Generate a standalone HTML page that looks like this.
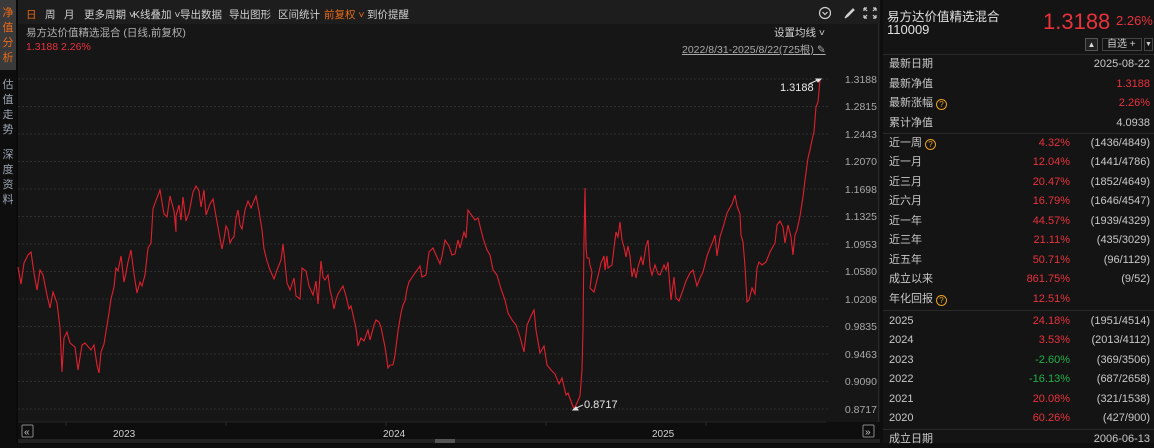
<!DOCTYPE html>
<html><head><meta charset="utf-8"><style>
*{margin:0;padding:0;box-sizing:border-box}
body{width:1154px;height:443px;background:#0e0e0e;font-family:"Liberation Sans","Noto Sans CJK SC",sans-serif;color:#c8c8c8;position:relative;overflow:hidden;font-size:11px}
.a{position:absolute;white-space:nowrap}
.side{position:absolute;left:0;width:16px;font-size:11px;line-height:15px;text-align:center;color:#9aa3b0}
.red{color:#e8323c}.grn{color:#22b04a}.org{color:#e86a1a}
.tb{position:absolute;top:7px;font-size:10.5px;color:#d0d0d0;white-space:nowrap}
.rp{position:absolute;left:883px;top:0;width:271px;height:443px;background:#141414}
.row{position:absolute;left:6px;right:4px;height:18px;font-size:11px;line-height:18px}
.row .l{position:absolute;left:0;color:#c8c8c8}
.row .m{position:absolute;right:80px;text-align:right}
.row .r{position:absolute;right:0;color:#c8c8c8}
.q{display:inline-block;width:11px;height:11px;border:1px solid #e8a020;border-radius:50%;color:#e8a020;font-size:8px;line-height:9px;text-align:center;vertical-align:-1px;margin-left:3px}
.sep{position:absolute;left:0;right:0;height:1px;background:#2a2a2a}
</style></head><body>
<div class="a" style="left:0;top:0;width:16px;height:70px;background:#3a3a3a"></div>
<div class="side" style="top:6px;color:#e86a1a;line-height:15px">净<br>值<br>分<br>析</div>
<div class="side" style="top:78px">估<br>值<br>走<br>势</div>
<div class="side" style="top:148px">深<br>度<br>资<br>料</div>
<div class="a" style="left:16px;top:0;width:2px;height:443px;background:#0a0a0a"></div>
<div class="a" style="left:18px;top:0;width:862px;height:24px;background:#1d1d1d"></div>
<div class="tb" style="left:26px;color:#e86a1a">日</div>
<div class="tb" style="left:45px">周</div>
<div class="tb" style="left:64px">月</div>
<div class="tb" style="left:84px">更多周期 ˅</div>
<div class="tb" style="left:133px">K线叠加 ˅</div>
<div class="tb" style="left:180px">导出数据</div>
<div class="tb" style="left:229px">导出图形</div>
<div class="tb" style="left:278px">区间统计</div>
<div class="tb" style="left:324px;color:#e86a1a">前复权 ˅</div>
<div class="tb" style="left:367px">到价提醒</div>
<svg class="a" style="left:818px;top:6px" width="60" height="14" viewBox="0 0 60 14" fill="none" stroke="#cfcfcf" stroke-width="1.2">
<circle cx="7" cy="7" r="5.5"/><path d="M4.5 6l2.5 2.5 2.5-2.5"/>
<path d="M27 12l2-3 6-6 1 1-6 6z" fill="#cfcfcf"/>
<path d="M46 2h3M46 2v3M58 2h-3M58 2v3M46 12h3M46 12v-3M58 12h-3M58 12v-3M46 2l3 3M58 2l-3 3M46 12l3-3M58 12l-3-3"/>
</svg>
<div class="a" style="left:18px;top:24px;width:862px;height:398px;background:#161616"></div>
<div class="a" style="left:26px;top:25px;color:#b0b0b0;font-size:10.5px">易方达价值精选混合 (日线,前复权)</div>
<div class="a red" style="left:26px;top:41px;font-size:10.5px">1.3188 2.26%</div>
<div class="a" style="left:774px;top:25px;color:#d0d0d0;font-size:10.5px">设置均线 ˅</div>
<div class="a" style="left:682px;top:42px;color:#aaa;text-decoration:underline;font-size:10.5px">2022/8/31-2025/8/22(725根) ✎</div>
<div class="a" style="left:878px;top:24px;width:1px;height:398px;background:#2a2a2a"></div>
<svg class="a" style="left:0;top:0" width="880" height="443">
<g stroke="#2e2e2e" stroke-dasharray="2,2" stroke-width="1">
<line x1="18" x2="828" y1="79" y2="79"/><line x1="18" x2="828" y1="106.5" y2="106.5"/><line x1="18" x2="828" y1="134" y2="134"/><line x1="18" x2="828" y1="161.5" y2="161.5"/><line x1="18" x2="828" y1="189" y2="189"/><line x1="18" x2="828" y1="216.5" y2="216.5"/><line x1="18" x2="828" y1="244" y2="244"/><line x1="18" x2="828" y1="271.5" y2="271.5"/><line x1="18" x2="828" y1="299" y2="299"/><line x1="18" x2="828" y1="326.5" y2="326.5"/><line x1="18" x2="828" y1="354" y2="354"/><line x1="18" x2="828" y1="381.5" y2="381.5"/><line x1="18" x2="828" y1="409" y2="409"/>
</g>
<polyline fill="none" stroke="#e0202e" stroke-width="1.1" points="18,267 21,284 24,263 28,255 31,252 34,273 37,290 40,270 43,275 47,295 50,308 53,292 57,303 60,328 62,372 64,338 67,332 70,343 75,347 78,370 82,345 85,343 91,350 94,345 97,365 99,373 101,352 104,344 109,313 111,299 114,287 116,268 118,271 121,256 124,282 126,273 128,262 131,250 134,274 137,293 140,282 142,286 145,275 147,257 148,248 151,243 153,209 155,203 160,190 164,214 167,217 170,196 174,211 176,232 176,216 179,205 181,220 183,197 186,221 189,213 193,192 196,186 199,191 201,207 204,190 206,215 210,204 213,199 219,233 222,249 224,239 226,226 228,230 230,243 232,239 234,237 236,218 238,210 240,225 242,229 245,210 248,201 251,208 256,196 259,211 262,230 264,249 267,261 270,270 274,279 277,270 281,260 283,244 284,253 287,283 290,290 294,278 296,296 300,299 302,268 306,271 309,286 313,295 316,281 318,304 321,261 323,277 325,280 328,275 330,290 332,298 334,309 336,300 338,294 343,286 346,296 349,309 351,306 356,328 358,346 361,338 364,341 368,330 370,340 374,325 376,320 379,322 381,327 385,347 388,368 390,365 393,365 395,355 398,331 401,313 403,305 405,301 407,289 409,282 415,273 420,266 422,277 426,275 429,252 433,248 436,255 440,264 442,256 445,240 449,246 452,255 455,254 458,240 460,248 464,232 466,238 468,210 470,213 475,220 478,218 483,238 487,250 490,255 493,270 497,275 501,289 505,300 508,313 512,320 516,325 520,337 524,352 527,325 531,316 534,310 536,330 540,353 544,346 547,365 551,370 555,374 559,384 562,378 566,395 568,393 572,404 574,409 577,403 580,396 582,370 583,330 584,240 585,188 586,247 587,258 589,258 590,265 592,272 590,288 594,292 598,276 601,263 604,256 605,270 607,256 608,268 612,265 614,248 616,232 618,237 620,222 622,240 624,247 626,257 628,246 630,256 632,277 634,268 636,278 638,267 641,257 643,265 646,246 648,240 650,267 652,275 655,265 658,274 660,275 664,265 666,270 668,262 671,300 674,277 676,298 679,301 683,290 686,281 690,273 693,270 697,286 700,278 703,272 707,256 710,248 713,241 715,235 717,256 720,237 724,224 727,213 732,204 735,195 737,206 740,214 741,235 743,242 745,266 747,302 749,300 752,288 755,294 757,268 759,262 762,265 766,262 770,252 775,243 777,225 780,221 783,227 785,243 788,225 791,237 793,255 795,235 797,230 800,216 803,197 805,180 807,165 808,158 810,150 812,140 814,132 816,107 818,102 820,80"/>
<g stroke="#e0e0e0" stroke-width="1" fill="#e0e0e0">
<line x1="809" y1="84" x2="820" y2="79"/><path d="M821,79 l-5,0 l2,3z"/>
<line x1="583" y1="405" x2="574" y2="409"/><path d="M573,410 l5,0 l-2,-3z"/>
</g>
<text x="780" y="91" fill="#e8e8e8" font-size="11" font-family="Liberation Sans">1.3188</text>
<text x="584" y="408" fill="#e8e8e8" font-size="11" font-family="Liberation Sans">0.8717</text>
<g fill="#a8a8a8" font-size="10.5" font-family="Liberation Sans" text-anchor="end">
<text x="877" y="83">1.3188</text><text x="877" y="110">1.2815</text><text x="877" y="138">1.2443</text><text x="877" y="165">1.2070</text><text x="877" y="193">1.1698</text><text x="877" y="220">1.1325</text><text x="877" y="248">1.0953</text><text x="877" y="275">1.0580</text><text x="877" y="303">1.0208</text><text x="877" y="330">0.9835</text><text x="877" y="358">0.9463</text><text x="877" y="385">0.9090</text><text x="877" y="413">0.8717</text>
</g>
<line x1="18" x2="826" y1="422" y2="422" stroke="#262626"/>
<g stroke="#2a2a2a"><line x1="66" x2="66" y1="422" y2="426"/><line x1="226" x2="226" y1="422" y2="426"/><line x1="386" x2="386" y1="422" y2="426"/><line x1="546" x2="546" y1="422" y2="426"/><line x1="706" x2="706" y1="422" y2="426"/></g>
<rect x="22" y="425" width="11" height="12" fill="none" stroke="#888" rx="1"/>
<text x="24" y="435" fill="#ccc" font-size="10" font-family="Liberation Sans">«</text>
<rect x="863" y="425" width="11" height="12" fill="none" stroke="#888" rx="1"/>
<text x="865" y="435" fill="#ccc" font-size="10" font-family="Liberation Sans">»</text>
<g fill="#d0d0d0" font-size="10" font-family="Liberation Sans"><text x="113" y="437">2023</text><text x="383" y="437">2024</text><text x="652" y="437">2025</text></g>
<rect x="18" y="439" width="862" height="4" fill="#222"/>
<rect x="435" y="439" width="20" height="4" fill="#555"/>
</svg>
<div class="rp">
<div class="a" style="left:4px;top:6px;font-size:12.5px;color:#e0e0e0">易方达价值精选混合</div>
<div class="a" style="left:4px;top:22px;font-size:13px;color:#e0e0e0">110009</div>
<div class="a red" style="left:160px;top:9px;font-size:22px">1.3188</div>
<div class="a red" style="left:233px;top:13px;font-size:13px">2.26%</div>
<div class="a" style="left:202px;top:38px;width:13px;height:13px;border:1px solid #555;background:#222;color:#ddd;font-size:8px;text-align:center;line-height:11px">▲</div>
<div class="a" style="left:219px;top:38px;width:40px;height:13px;border:1px solid #444;color:#ccc;font-size:10px;line-height:11px;padding-left:4px">自选 +</div>
<div class="a" style="left:261px;top:38px;width:9px;height:13px;border:1px solid #444;color:#ccc;font-size:7px;line-height:11px;text-align:center">▼</div>
<div class="sep" style="top:54px"></div>
<div class="row" style="top:55px"><span class="l">最新日期</span><span class="r">2025-08-22</span></div>
<div class="row" style="top:75px"><span class="l">最新净值</span><span class="r" style="color:#e8323c">1.3188</span></div>
<div class="row" style="top:94px"><span class="l">最新涨幅<span class="q">?</span></span><span class="r" style="color:#e8323c">2.26%</span></div>
<div class="row" style="top:114px"><span class="l">累计净值</span><span class="r">4.0938</span></div>
<div class="sep" style="top:133px"></div>
<div class="row" style="top:134px"><span class="l">近一周<span class="q">?</span></span><span class="m red">4.32%</span><span class="r">(1436/4849)</span></div>
<div class="row" style="top:153px"><span class="l">近一月</span><span class="m red">12.04%</span><span class="r">(1441/4786)</span></div>
<div class="row" style="top:173px"><span class="l">近三月</span><span class="m red">20.47%</span><span class="r">(1852/4649)</span></div>
<div class="row" style="top:192px"><span class="l">近六月</span><span class="m red">16.79%</span><span class="r">(1646/4547)</span></div>
<div class="row" style="top:212px"><span class="l">近一年</span><span class="m red">44.57%</span><span class="r">(1939/4329)</span></div>
<div class="row" style="top:231px"><span class="l">近三年</span><span class="m red">21.11%</span><span class="r">(435/3029)</span></div>
<div class="row" style="top:251px"><span class="l">近五年</span><span class="m red">50.71%</span><span class="r">(96/1129)</span></div>
<div class="row" style="top:270px"><span class="l">成立以来</span><span class="m red">861.75%</span><span class="r">(9/52)</span></div>
<div class="row" style="top:290px"><span class="l">年化回报<span class="q">?</span></span><span class="m red">12.51%</span></div>
<div class="sep" style="top:310px"></div>
<div class="row" style="top:312px"><span class="l">2025</span><span class="m red">24.18%</span><span class="r">(1951/4514)</span></div>
<div class="row" style="top:331px"><span class="l">2024</span><span class="m red">3.53%</span><span class="r">(2013/4112)</span></div>
<div class="row" style="top:351px"><span class="l">2023</span><span class="m grn">-2.60%</span><span class="r">(369/3506)</span></div>
<div class="row" style="top:370px"><span class="l">2022</span><span class="m grn">-16.13%</span><span class="r">(687/2658)</span></div>
<div class="row" style="top:390px"><span class="l">2021</span><span class="m red">20.08%</span><span class="r">(321/1538)</span></div>
<div class="row" style="top:409px"><span class="l">2020</span><span class="m red">60.26%</span><span class="r">(427/900)</span></div>
<div class="sep" style="top:429px"></div>
<div class="row" style="top:430px"><span class="l">成立日期</span><span class="r">2006-06-13</span></div>
</div>
</body></html>
